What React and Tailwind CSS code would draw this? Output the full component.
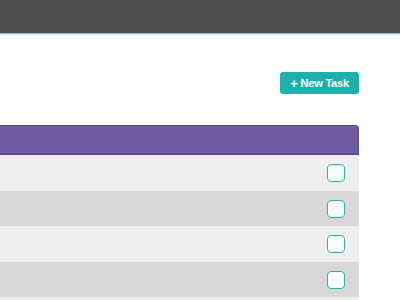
export default function App() {
  const rows = [
    { bg: "bg-[#eeeeee]", h: "h-[36px]" },
    { bg: "bg-[#d9d9d9]", h: "h-[35px]" },
    { bg: "bg-[#eeeeee]", h: "h-[36px]" },
    { bg: "bg-[#d9d9d9]", h: "h-[35px]" },
    { bg: "bg-[#eeeeee]", h: "h-[36px]" },
  ];
  return (
    <div className="w-[400px] h-[300px] overflow-hidden bg-white" style={{ fontFamily: '"Liberation Sans", Arial, sans-serif' }}>
      <div className="h-[33px] bg-[#4d4d4d]" />
      <div className="h-[1px] bg-[#5fd3e0]" />
      <div className="h-[1px] bg-[#c8f0f4]" />
      <div className="w-[359px]">
        <div className="flex justify-end pt-[37px] pb-[31px]">
          <button className="w-[79px] h-[22px] rounded-[3px] bg-[#1fb0ad] text-white text-[11px] font-bold tracking-[-0.2px] flex items-center justify-center gap-[3px]">
            <span className="text-[13px] leading-none">+</span>
            <span>New Task</span>
          </button>
        </div>
        <div className="h-[30px] bg-[#6f5b9f] rounded-tr-[4px] border-t border-b-2 border-r border-[#5c4a8c]" />
        {rows.map((r, i) => (
          <div
            key={i}
            className={`${r.h} ${r.bg} flex items-center justify-end pr-[14px]`}
          >
            <div className="w-[18px] h-[18px] rounded-[4px] border-[1.5px] border-[#2bb3b0] bg-[#f7fcfc]" />
          </div>
        ))}
      </div>
    </div>
  );
}
